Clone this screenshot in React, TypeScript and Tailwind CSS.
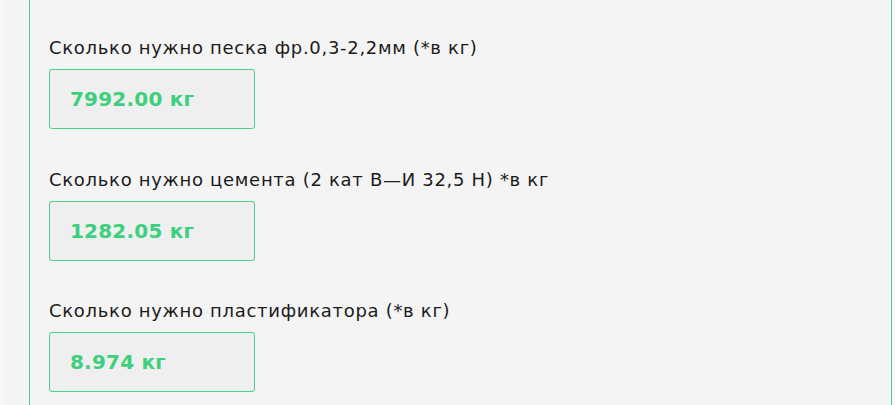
const items = [
  { label: "Сколько нужно песка фр.0,3-2,2мм (*в кг)", value: "7992.00 кг", gap: "mb-[37px]" },
  { label: "Сколько нужно цемента (2 кат В—И 32,5 Н) *в кг", value: "1282.05 кг", gap: "mb-[36px]" },
  { label: "Сколько нужно пластификатора (*в кг)", value: "8.974 кг", gap: "mb-[36px]" },
];

export default function App() {
  return (
    <div className="h-[405px] w-full overflow-hidden bg-[#f8f8f8] pl-[4px] pr-[3px] font-['DejaVu_Sans',sans-serif]">
      <div className="h-full bg-[#f4f4f4] pl-[25px]">
        <div className="h-full border-x border-[#3fd58a] pl-[19px] pt-[34px]">
          {items.map((item) => (
            <div key={item.value} className={item.gap}>
              <p className="text-[18px] leading-[27px] tracking-[0.7px] text-[#1b1b1b]">{item.label}</p>
              <div className="mt-[8px] flex h-[60px] w-[206px] items-center rounded-[3px] border border-[#4ad08b] bg-[#efefef] pl-[20px]">
                <span className="text-[20px] font-bold tracking-[0.2px] text-[#3ccf7e]">{item.value}</span>
              </div>
            </div>
          ))}
        </div>
      </div>
    </div>
  );
}
